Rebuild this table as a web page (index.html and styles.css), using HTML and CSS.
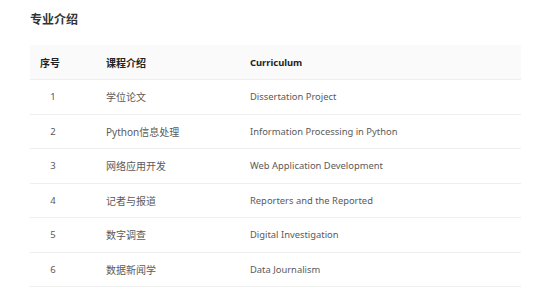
FILE: index.html
```html
<!DOCTYPE html>
<html lang="zh">
<head>
<meta charset="utf-8">
<link rel="stylesheet" href="styles.css">
</head>
<body>
<div class="page">
  <h2 class="title">专业介绍</h2>
  <div class="table">
    <div class="row head">
      <div class="cell c1">序号</div>
      <div class="cell c2">课程介绍</div>
      <div class="cell c3">Curriculum</div>
    </div>
    <div class="row">
      <div class="cell c1">1</div>
      <div class="cell c2">学位论文</div>
      <div class="cell c3">Dissertation Project</div>
    </div>
    <div class="row">
      <div class="cell c1">2</div>
      <div class="cell c2">Python信息处理</div>
      <div class="cell c3">Information Processing in Python</div>
    </div>
    <div class="row">
      <div class="cell c1">3</div>
      <div class="cell c2">网络应用开发</div>
      <div class="cell c3">Web Application Development</div>
    </div>
    <div class="row">
      <div class="cell c1">4</div>
      <div class="cell c2">记者与报道</div>
      <div class="cell c3">Reporters and the Reported</div>
    </div>
    <div class="row">
      <div class="cell c1">5</div>
      <div class="cell c2">数字调查</div>
      <div class="cell c3">Digital Investigation</div>
    </div>
    <div class="row">
      <div class="cell c1">6</div>
      <div class="cell c2">数据新闻学</div>
      <div class="cell c3">Data Journalism</div>
    </div>
  </div>
</div>
</body>
</html>
```
FILE: styles.css
```css
html, body {
  margin: 0;
  padding: 0;
  background: #fff;
}
.page {
  padding: 11px 33px 0 30px;
  font-family: "Noto Sans", "Noto Sans CJK SC", sans-serif;
}
.title {
  margin: 0;
  font-size: 12px;
  line-height: 15px;
  font-weight: 700;
  color: #333;
  font-family: "Noto Sans CJK SC", sans-serif;
}
.table {
  margin-top: 19px;
  width: 491px;
}
.row {
  display: grid;
  grid-template-columns: 46px 158px 1fr;
  height: 33.5px;
  border-bottom: 1px solid #eeeeee;
  align-items: center;
  font-size: 10px;
  color: #5a5a5a;
}
.row.head {
  height: 34px;
  background: #fafafa;
  color: #222;
  font-weight: 700;
}
.cell {
  white-space: nowrap;
}
.c1 {
  text-align: center;
  font-size: 9.5px;
}
.head .c1 {
  padding-right: 6px;
  font-size: 10px;
}
.c2 {
  padding-left: 30px;
}
.c3 {
  padding-left: 16px;
  font-size: 9.4px;
}
```
